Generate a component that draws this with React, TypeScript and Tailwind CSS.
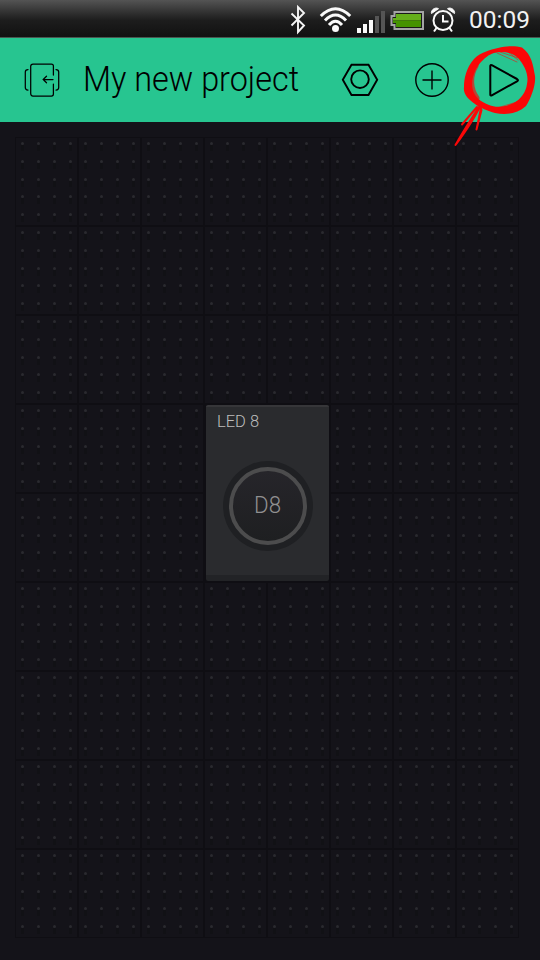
import React from "react";

function StatusBar() {
  return (
    <div className="flex h-[38px] shrink-0 items-center border-b border-[#4a5751] bg-linear-to-b from-[#545454] from-0% via-[#1d1d1d] via-55% to-[#111111] to-100%">
      <svg className="h-[37px] w-[469px] shrink-0" viewBox="0 0 469 37" fill="none">
        <path d="M291.500 13.500 304 25.500 298 32V7L304 13 291.500 25.500" stroke="#f5f5f5" strokeWidth="1.900" />
        <g stroke="#fafafa" strokeWidth="3">
          <path d="M320.800 16Q335.500 1.500 350.200 16" />
          <path d="M325 20.500Q335.500 9.500 346 20.500" />
          <path d="M329 25Q335.500 17.500 342 25" />
        </g>
        <circle cx="335.500" cy="28.500" r="3.500" fill="#fafafa" />
        <path d="M357 28h4v5h-4zM363 24h4v9h-4zM369 20h4v13h-4z" fill="#fafafa" />
        <path d="M375 16h4v17h-4zM381 11h4v22h-4z" fill="#555" />
        <path d="M394.500 12H423v17H394.500V25H391.500V16H394.500Z" fill="#191919" stroke="#a4a4a4" strokeWidth="2" />
        <path d="M396 14h25v6.500h-28V18h3z" fill="#65ae1b" />
        <path d="M393 20.500h28V27h-25v-4h-3z" fill="#459200" />
        <g stroke="#fafafa" strokeWidth="2">
          <circle cx="443" cy="20.500" r="9.500" />
          <path d="M443 15v6.500h5.500M436.500 28l-2.500 3.500M449.500 28l2.500 3.500" />
        </g>
        <path d="M431.500 13.500c-1-3 3.500-7 7-4.800ZM454.500 13.500c1-3-3.500-7-7-4.800Z" fill="#fafafa" stroke="#fafafa" />
      </svg>
      <span className="origin-left scale-x-[1.020] pt-[2px] font-[Roboto,sans-serif] text-[24px] leading-none whitespace-nowrap text-[#f2f2f2]">00:09</span>
    </div>
  );
}

function ScribbleHighlight() {
  return (
    <svg className="pointer-events-none absolute top-0 left-0 h-[160px] w-[540px]" viewBox="0 0 540 160" fill="none" stroke="#fb0707" strokeLinecap="round" strokeLinejoin="round">
      <path fillRule="evenodd" fill="#fb0707" stroke="none" d="M474 59C481 52 490 50 498 48C507 45.500 516 46 522 47.500C532 55 533 65 535 76C536 85 531 98 526 106C517 114 506 115 495 113C488 111 480 108 475 104C468 99 463 94 464 87C464 79 466 68 474 59ZM482 61C475 68 471 78 472.500 88C474 97 481 102 489 105C496 108 506 107 514 103C521 99 526 92 527 84C529 75 525 66 518 58C512 52 502 51 494 53C488 55 485 58 482 61Z" />
      <path d="M476 66C470 76 470 88 477 98" strokeWidth="5" opacity=".65" />
      <path d="M512 50Q522 52 527 65M500 109Q518 108 526 95" strokeWidth="4" />
      <path d="M497 53l20 9M500 52l18 6M507 51l11 9M497 108l23-7M500 109l22-9M477 63l-7 20M484 57l-12 15" strokeWidth="1" opacity=".55" />
      <path d="M481 104Q474 120 455.500 145Q465 128 481 104M477 107L462 124.500M481 108L476.500 129.500L481.500 110" strokeWidth="2" fill="#fb0707" />
    </svg>
  );
}

function Header() {
  return (
    <header className="flex h-[84px] shrink-0 items-center bg-[#27c590] text-black">
      <svg className="ml-[24px] h-[36px] w-[36px] shrink-0" viewBox="0 0 36 36" fill="none" stroke="currentColor" strokeWidth="1.250" strokeLinecap="round">
        <path d="M29.400 13V4Q29.400 2 27.400 2H9Q6.700 2 6.700 4.300V31.500Q6.700 34 9 34H27.400Q29.400 34 29.400 32V22" />
        <path d="M29 17.500H19.500M22.500 14.200l-3.300 3.300 3.300 3.300M4 7.500Q1.300 7.500 1.300 10V25.500Q1.300 28 4 28M32 7.500Q34.700 7.500 34.700 10V25.500Q34.700 28 32 28" />
      </svg>
      <div className="ml-[23px] w-[257px] shrink-0 pb-[2px]">
        <h1 className="origin-left scale-x-[0.925] font-[Roboto,sans-serif] text-[35px] leading-none font-light whitespace-nowrap">My new project</h1>
      </div>
      <svg className="h-[36px] w-[40px] shrink-0" viewBox="340 62 40 36" fill="none" stroke="currentColor" strokeWidth="1.900">
        <path d="M351.500 64.700H368.500L377.200 79.800L368.500 95H351.500L342.800 79.800Z" />
        <circle cx="360" cy="79.200" r="8.800" />
      </svg>
      <svg className="ml-[34px] h-[36px] w-[36px] shrink-0" viewBox="414 62 36 36" fill="none" stroke="currentColor" strokeWidth="1.400">
        <circle cx="432" cy="80" r="16.200" />
        <path d="M422.500 80h19M432 70.500v19" />
      </svg>
      <svg className="ml-[36px] h-[36px] w-[36px] shrink-0" viewBox="486 62 36 36" fill="none" stroke="currentColor" strokeWidth="2" strokeLinejoin="round">
        <path d="M490.300 66Q490.300 64.500 491.800 65.200L517 79Q519 80.200 517 81.300L491.800 95.300Q490.300 96 490.300 94.500Z" />
      </svg>
    </header>
  );
}

function GridCell() {
  return (
    <div className="grid grid-cols-4 grid-rows-5 ring-1 ring-[#0f0e13] ring-inset">
      {Array.from({ length: 20 }, (_, i) => (
        <div key={i} className="flex flex-col items-center pt-[5px]">
          <div className="h-[3px] w-[3px] shrink-0 rounded-full bg-[#2a2a2f]" />
          <div className="h-[6px] w-[3px] shrink-0 bg-[#111115]" />
        </div>
      ))}
    </div>
  );
}

function LedButton() {
  return (
    <div className="col-span-2 col-start-4 row-span-2 row-start-4 flex bg-[#0f0e13] pt-[1px] pr-[1px] pb-[1px] pl-[2px]">
      <div className="flex flex-1 flex-col items-center rounded-[2px] border-t-2 border-b-[6px] border-t-[#363639] border-b-[#222326] bg-[#2a2b2e]">
        <div className="mt-[6px] w-full pl-[11px]">
          <div className="origin-left font-[Roboto,sans-serif] text-[16.500px] leading-[18px] font-light text-[#bdbdbd]">LED 8</div>
        </div>
        <div className="mt-[30px] flex h-[90px] w-[90px] items-center justify-center rounded-full bg-[#1f2023]">
          <div className="flex h-[78px] w-[78px] items-center justify-center rounded-full border-4 border-[#4c4c4d] bg-linear-to-b from-[#26252a] to-[#1e1f21]">
            <span className="scale-x-[0.930] pb-[2px] font-[Roboto,sans-serif] text-[24px] leading-none font-light text-[#909090]">D8</span>
          </div>
        </div>
      </div>
    </div>
  );
}

export default function App() {
  return (
    <div className="relative flex h-[960px] w-[540px] flex-col overflow-hidden bg-[#141319]">
      <StatusBar />
      <Header />
      <main className="mt-[15px] ml-[15px] grid h-[801px] w-[504px] shrink-0 grid-cols-8 grid-rows-9">
        <LedButton />
        {Array.from({ length: 68 }, (_, i) => (
          <GridCell key={i} />
        ))}
      </main>
      <ScribbleHighlight />
    </div>
  );
}
